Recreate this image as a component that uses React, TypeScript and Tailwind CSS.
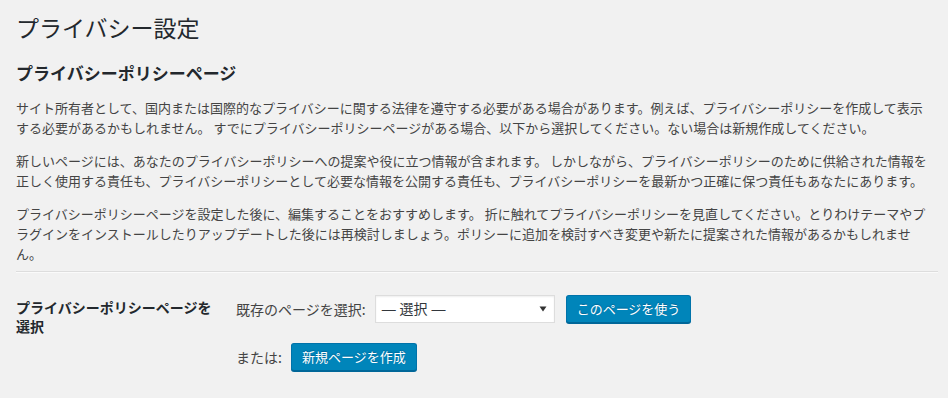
import React from 'react'

const font = { fontFamily: '"Noto Sans CJK JP", "Noto Sans", sans-serif' }

const paragraphs = [
  'サイト所有者として、国内または国際的なプライバシーに関する法律を遵守する必要がある場合があります。例えば、プライバシーポリシーを作成して表示する必要があるかもしれません。 すでにプライバシーポリシーページがある場合、以下から選択してください。ない場合は新規作成してください。',
  '新しいページには、あなたのプライバシーポリシーへの提案や役に立つ情報が含まれます。 しかしながら、プライバシーポリシーのために供給された情報を正しく使用する責任も、プライバシーポリシーとして必要な情報を公開する責任も、プライバシーポリシーを最新かつ正確に保つ責任もあなたにあります。',
  'プライバシーポリシーページを設定した後に、編集することをおすすめします。 折に触れてプライバシーポリシーを見直してください。とりわけテーマやプラグインをインストールしたりアップデートした後には再検討しましょう。ポリシーに追加を検討すべき変更や新たに提案された情報があるかもしれません。'
]

const PrimaryButton = ({ label }: { label: string }) => (
  <button
    type="button"
    className="h-[28px] rounded-[3px] border border-[#0073aa] border-b-[#006799] bg-[#0085ba] px-[10px] text-[13px] leading-[26px] text-white shadow-[0_1px_0_#006799] [text-shadow:0_-1px_1px_#006799]"
  >
    {label}
  </button>
)

export default function App() {
  return (
    <div className="min-h-[398px] w-full bg-[#f1f1f1]" style={font}>
      <div className="ml-4 mr-[10px]">
        <h1 className="pt-[13px] text-[23px] font-normal leading-[29px] text-[#23282d]">プライバシー設定</h1>
        <h2 className="mt-[20px] text-[17px] font-bold leading-[22px] text-[#23282d]">
          プライバシーポリシーページ
        </h2>
        <div className="mt-[14px] flex flex-col gap-[13px]">
          {paragraphs.map((text, i) => (
            <p key={i} className="max-w-[912px] text-[13px] leading-[20px] text-[#444]">
              {text}
            </p>
          ))}
        </div>
        <div className="mt-[7px] border-t border-b border-t-[#dddddd] border-b-[#fafafa]" />
        <div className="flex pt-[25px]">
          <div className="w-[200px] text-[14px] font-bold leading-[19px] text-[#23282d]">
            プライバシーポリシーページを選択
          </div>
          <div className="ml-[20px] flex flex-col gap-[20px] text-[14px] text-[#444]">
            <div className="-mt-[3px] flex items-center">
              <span className="leading-[20px]">既存のページを選択:</span>
              <div className="ml-[9px] flex h-[28px] w-[180px] items-center justify-between border border-[#dddddd] bg-white pl-[6px] pr-[7px] text-[14px] text-[#32373c] shadow-[inset_0_1px_2px_rgba(0,0,0,0.07)]">
                <span className="font-['Liberation_Sans','Noto_Sans_CJK_JP',sans-serif]">— 選択 —</span>
                <svg width="8" height="6" viewBox="0 0 8 6" aria-hidden="true">
                  <path d="M0.5 0.5 H7.5 L4 5.5 Z" fill="#333" />
                </svg>
              </div>
              <div className="ml-[11px]">
                <PrimaryButton label="このページを使う" />
              </div>
            </div>
            <div className="flex items-center">
              <span className="leading-[20px]">または:</span>
              <div className="ml-[9px]">
                <PrimaryButton label="新規ページを作成" />
              </div>
            </div>
          </div>
        </div>
      </div>
    </div>
  )
}
